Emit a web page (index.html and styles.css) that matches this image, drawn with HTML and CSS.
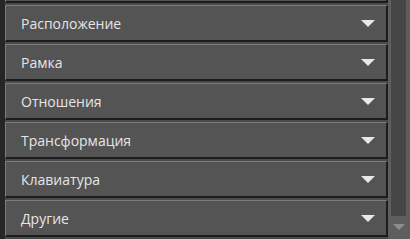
FILE: index.html
```html
<!DOCTYPE html>
<html lang="ru">
<head>
<meta charset="utf-8">
<link rel="stylesheet" href="styles.css">
</head>
<body>
<div class="panel">
  <div class="strip"></div>
  <div class="list">
    <div class="rows">
      <div class="row row-partial"></div>
      <div class="row"><span class="label">Расположение</span><span class="caret"></span></div>
      <div class="row"><span class="label">Рамка</span><span class="caret"></span></div>
      <div class="row"><span class="label">Отношения</span><span class="caret"></span></div>
      <div class="row"><span class="label">Трансформация</span><span class="caret"></span></div>
      <div class="row"><span class="label">Клавиатура</span><span class="caret"></span></div>
      <div class="row"><span class="label">Другие</span><span class="caret"></span></div>
    </div>
  </div>
  <div class="scrollbar">
    <div class="track"></div>
    <div class="btn"><span class="arrow"></span></div>
  </div>
</div>
</body>
</html>
```
FILE: styles.css
```css
html, body {
  margin: 0;
  padding: 0;
  background: #262626;
}
.panel {
  display: flex;
  width: 410px;
  height: 239px;
  overflow: hidden;
}
.strip {
  width: 5px;
  background: #262626;
  flex: none;
}
.list {
  width: 383px;
  flex: none;
  background: #4a4a4a;
  overflow: hidden;
}
.rows {
  display: flex;
  flex-direction: column;
  gap: 2px;
  margin-top: -34px;
}
.row {
  height: 34px;
  flex: none;
  display: flex;
  align-items: center;
  justify-content: space-between;
  background: #545454;
  border-top: 1px solid #7c7c7c;
  border-left: 1px solid #7c7c7c;
  border-right: 2px solid #1c1c1c;
  border-bottom: 2px solid #1c1c1c;
  padding: 0 11px 0 15px;
}
.label {
  font-family: "Open Sans", "Noto Sans", sans-serif;
  font-size: 14px;
  color: #e6e6e6;
}
.caret {
  width: 0;
  height: 0;
  border-left: 7px solid transparent;
  border-right: 7px solid transparent;
  border-top: 7px solid #e8e8e8;
}
.scrollbar {
  width: 22px;
  flex: none;
  background: #5e5e5e;
  display: flex;
  flex-direction: column;
  padding: 0 4px 2px 3px;
  box-sizing: border-box;
}
.track {
  height: 216px;
  background: #464646;
  flex: none;
}
.btn {
  flex: 1;
  display: flex;
  align-items: center;
  justify-content: center;
}
.arrow {
  width: 0;
  height: 0;
  border-left: 6px solid transparent;
  border-right: 6px solid transparent;
  border-top: 6px solid #8e8e8e;
}
```
